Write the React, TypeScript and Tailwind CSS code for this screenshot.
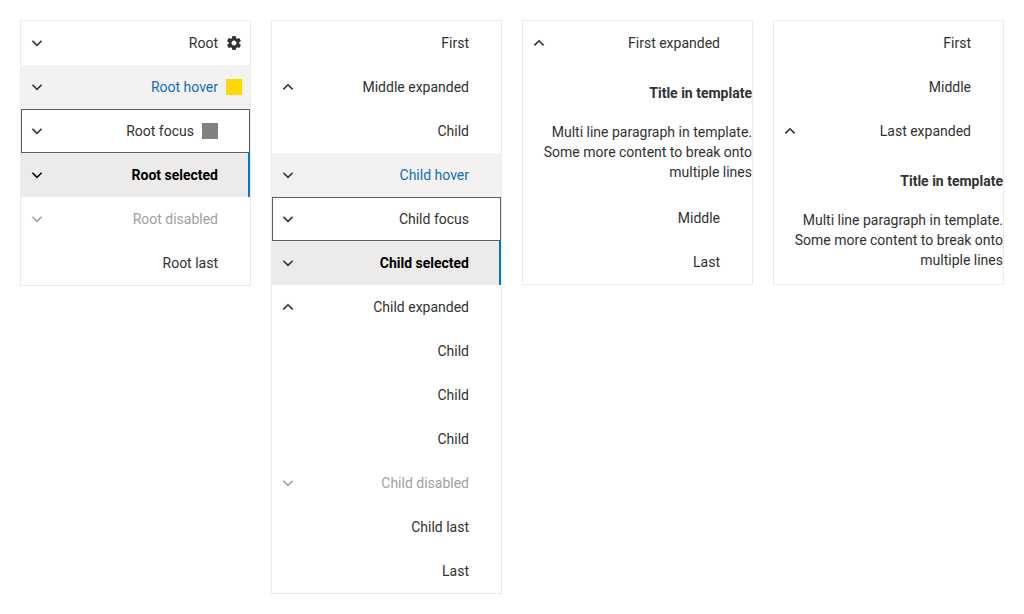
import React from "react";

type Kind = "normal" | "hover" | "focus" | "selected" | "disabled";

const Chevron = ({ up = false, className }: { up?: boolean; className: string }) => (
  <svg width="16" height="16" viewBox="0 0 16 16" fill="none" className={`shrink-0 ${className}`}>
    <path
      d={up ? "M3.4 10.4 8 5.8l4.6 4.6" : "M3.4 5.8 8 10.4l4.6-4.6"}
      stroke="currentColor"
      strokeWidth="1.6"
    />
  </svg>
);

const Gear = () => (
  <svg width="16" height="16" viewBox="0.6 0.6 22.8 22.8" className="shrink-0" fill="#323130">
    <path d="M19.43 12.98c.04-.32.07-.64.07-.98s-.03-.66-.07-.98l2.11-1.65c.19-.15.24-.42.12-.64l-2-3.46c-.12-.22-.39-.3-.61-.22l-2.49 1c-.52-.4-1.08-.73-1.69-.98l-.38-2.65C14.46 2.18 14.25 2 14 2h-4c-.25 0-.46.18-.49.42l-.38 2.65c-.61.25-1.17.59-1.69.98l-2.49-1c-.23-.09-.49 0-.61.22l-2 3.46c-.13.22-.07.49.12.64l2.11 1.65c-.04.32-.07.65-.07.98s.03.66.07.98l-2.11 1.65c-.19.15-.24.42-.12.64l2 3.46c.12.22.39.3.61.22l2.49-1c.52.4 1.08.73 1.69.98l.38 2.65c.03.24.24.42.49.42h4c.25 0 .46-.18.49-.42l.38-2.65c.61-.25 1.17-.59 1.69-.98l2.49 1c.23.09.49 0 .61-.22l2-3.46c.12-.22.07-.49-.12-.64l-2.11-1.65zM12 15.5c-1.93 0-3.5-1.57-3.5-3.5s1.57-3.5 3.5-3.5 3.5 1.57 3.5 3.5-1.57 3.5-3.5 3.5z" />
  </svg>
);

const kindClass: Record<Kind, string> = {
  normal: "text-[#323130]",
  hover: "bg-[#f3f2f1] text-[#106ebe]",
  focus: "text-[#323130] ring-1 ring-inset ring-[#605e5c]",
  selected: "bg-[#edebe9] text-black font-bold shadow-[inset_-2px_0_0_#0078d4]",
  disabled: "text-[#a19f9d]",
};

function Row({
  label,
  kind = "normal",
  chevron,
  chevronClass,
  before,
  after,
}: {
  label: string;
  kind?: Kind;
  chevron?: "up" | "down";
  chevronClass?: string;
  before?: React.ReactNode;
  after?: React.ReactNode;
}) {
  const tone = chevronClass ?? (kind === "disabled" ? "text-[#a19f9d]" : "text-[#323130]");
  return (
    <div className={`flex h-11 items-center pl-2 pr-2 ${kindClass[kind]}`}>
      <div className="w-4 shrink-0">
        {chevron && <Chevron up={chevron === "up"} className={tone} />}
      </div>
      <div className="flex-1 text-right">{label}</div>
      {before && <div className="ml-2">{before}</div>}
      <div className="ml-2 w-4 shrink-0">{after}</div>
    </div>
  );
}

const Square = ({ color }: { color: string }) => <div className={`h-4 w-4 ${color}`} />;

const Template = () => (
  <div className="pt-[18px] pb-[14px] text-right text-[#323130]">
    <div className="font-bold">Title in template</div>
    <div className="mt-[19px]">
      Multi line paragraph in template.
      <br />
      Some more content to break onto
      <br />
      multiple lines
    </div>
  </div>
);

const Panel = ({ children }: { children: React.ReactNode }) => (
  <div className="border border-[#edebe9] bg-white">{children}</div>
);

export default function App() {
  return (
    <div
      className="grid h-[614px] w-[1024px] grid-cols-4 items-start gap-5 bg-white p-5 text-sm leading-5"
      style={{ fontFamily: "Roboto, sans-serif" }}
    >
      <Panel>
        <Row label="Root" chevron="down" after={<Gear />} />
        <Row label="Root hover" kind="hover" chevron="down" after={<Square color="bg-[#ffd700]" />} />
        <Row label="Root focus" kind="focus" chevron="down" before={<Square color="bg-[#808080]" />} />
        <Row label="Root selected" kind="selected" chevron="down" chevronClass="text-black" />
        <Row label="Root disabled" kind="disabled" chevron="down" />
        <Row label="Root last" />
      </Panel>

      <Panel>
        <Row label="First" />
        <Row label="Middle expanded" chevron="up" />
        <Row label="Child" />
        <Row label="Child hover" kind="hover" chevron="down" />
        <Row label="Child focus" kind="focus" chevron="down" />
        <Row label="Child selected" kind="selected" chevron="down" />
        <Row label="Child expanded" chevron="up" />
        <Row label="Child" />
        <Row label="Child" />
        <Row label="Child" />
        <Row label="Child disabled" kind="disabled" chevron="down" />
        <Row label="Child last" />
        <Row label="Last" />
      </Panel>

      <Panel>
        <Row label="First expanded" chevron="up" />
        <Template />
        <Row label="Middle" />
        <Row label="Last" />
      </Panel>

      <Panel>
        <Row label="First" />
        <Row label="Middle" />
        <Row label="Last expanded" chevron="up" />
        <Template />
      </Panel>
    </div>
  );
}
